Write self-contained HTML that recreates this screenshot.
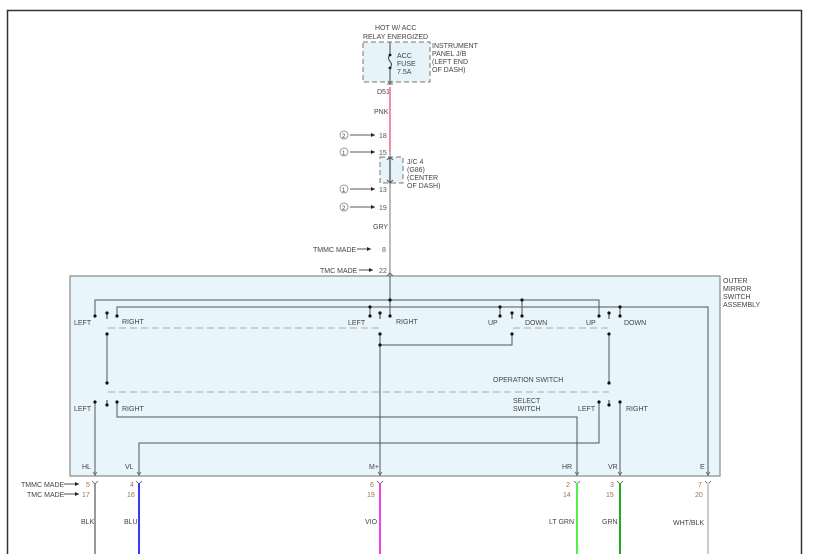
<!DOCTYPE html>
<html><head><meta charset="utf-8"><style>
html,body{margin:0;padding:0;background:#fff;width:814px;height:554px;overflow:hidden}
svg{display:block}
text{font-family:"Liberation Sans",sans-serif;font-size:7px;fill:#444}
.n{fill:#556}
.o{fill:#a07050}
</style></head><body>
<svg width="814" height="554" viewBox="0 0 814 554">
<defs>
<marker id="ah" markerWidth="6" markerHeight="6" refX="5" refY="3" orient="auto"><path d="M0,0.5 L5,3 L0,5.5Z" fill="#222"/></marker>
</defs>
<!-- frame -->
<path d="M7.5,554 V10.5 H801.5 V554" fill="none" stroke="#333" stroke-width="1.5"/>

<!-- top fuse box -->
<text x="375" y="30">HOT W/ ACC</text>
<text x="363" y="39">RELAY ENERGIZED</text>
<rect x="363" y="42" width="67" height="40" fill="#e6f3f9" stroke="#777" stroke-dasharray="5,3"/>
<text x="432" y="48">INSTRUMENT</text>
<text x="432" y="56">PANEL J/B</text>
<text x="432" y="64">(LEFT END</text>
<text x="432" y="72">OF DASH)</text>
<line x1="390" y1="42" x2="390" y2="55" stroke="#444"/>
<path d="M390,55 q-3,3 0,6.5 q3,3 0,6.5" fill="none" stroke="#444"/>
<circle cx="390" cy="55" r="1.4" fill="#111"/><circle cx="390" cy="68" r="1.4" fill="#111"/>
<line x1="390" y1="68" x2="390" y2="82" stroke="#444"/>
<text x="397" y="58">ACC</text><text x="397" y="66">FUSE</text><text x="397" y="74">7.5A</text>
<path d="M387,84 h6 M388,81 l2,3 l2,-3" stroke="#666" fill="none"/>
<text x="377" y="94">D51</text>
<line x1="390" y1="87" x2="390" y2="152" stroke="#f28aa8" stroke-width="2"/>
<text x="374" y="114">PNK</text>
<circle cx="344" cy="135" r="4" fill="none" stroke="#777" stroke-width=".7"/><text x="342" y="138" style="font-size:6px">2</text>
<line x1="350" y1="135" x2="375" y2="135" stroke="#222" stroke-width=".8" marker-end="url(#ah)"/><text class="n" x="379" y="138">18</text>
<circle cx="344" cy="152" r="4" fill="none" stroke="#777" stroke-width=".7"/><text x="342" y="155" style="font-size:6px">1</text>
<line x1="350" y1="152" x2="375" y2="152" stroke="#222" stroke-width=".8" marker-end="url(#ah)"/><text class="n" x="379" y="155">15</text>
<rect x="380" y="157" width="23" height="26" fill="#e6f3f9" stroke="#777" stroke-dasharray="5,3"/>
<text x="407" y="164">J/C 4</text><text x="407" y="172">(G86)</text><text x="407" y="180">(CENTER</text><text x="407" y="188">OF DASH)</text>
<line x1="390" y1="152" x2="390" y2="276" stroke="#bbb" stroke-width="2"/>
<path d="M387,160 l3,-3 l3,3 M387,180 l3,3 l3,-3" stroke="#555" fill="none"/>
<line x1="390" y1="157" x2="390" y2="183" stroke="#555"/>
<circle cx="344" cy="189" r="4" fill="none" stroke="#777" stroke-width=".7"/><text x="342" y="192" style="font-size:6px">1</text>
<line x1="350" y1="189" x2="375" y2="189" stroke="#222" stroke-width=".8" marker-end="url(#ah)"/><text class="n" x="379" y="192">13</text>
<circle cx="344" cy="207" r="4" fill="none" stroke="#777" stroke-width=".7"/><text x="342" y="210" style="font-size:6px">2</text>
<line x1="350" y1="207" x2="375" y2="207" stroke="#222" stroke-width=".8" marker-end="url(#ah)"/><text class="n" x="379" y="210">19</text>
<text x="373" y="229">GRY</text>
<text x="313" y="252">TMMC MADE</text><line x1="357" y1="249" x2="371" y2="249" stroke="#222" stroke-width=".8" marker-end="url(#ah)"/><text class="n" x="382" y="252">8</text>
<text x="320" y="273">TMC MADE</text><line x1="359" y1="270" x2="373" y2="270" stroke="#222" stroke-width=".8" marker-end="url(#ah)"/><text class="n" x="379" y="273">22</text>

<!-- main box -->
<rect x="70" y="276" width="650" height="200" fill="#e8f5fb" stroke="#888" stroke-width="1.2"/>
<path d="M387,276 l3,-3 l3,3" stroke="#666" fill="none"/>
<text x="723" y="283">OUTER</text><text x="723" y="291">MIRROR</text><text x="723" y="299">SWITCH</text><text x="723" y="307">ASSEMBLY</text>

<g stroke="#555" fill="none" stroke-width="1">
<path d="M390,276 V316"/>
<path d="M95,316 V300 H599 V316"/>
<path d="M522,300 V316"/>
<path d="M117,316 V307 H708 V476"/>
<path d="M370,307 V316 M500,307 V316 M620,307 V316"/>
<path d="M107,334 V383"/>
<path d="M380,334 V476"/>
<path d="M380,345 H512 V334"/>
<path d="M609,334 V383"/>
<path d="M95,402 V476"/>
<path d="M117,402 V417 H577 V476"/>
<path d="M139,476 V443 H599 V402"/>
<path d="M620,402 V476"/>
</g>
<g stroke="#aaa" stroke-dasharray="7,4" stroke-width="1">
<path d="M108,328 H380 M513,328 H609 M108,392 H609"/>
</g>
<g stroke="#333" stroke-width="1" fill="none">
<path d="M107,313 V319 M380,313 V319 M512,313 V319 M609,313 V319 M107,400 V405 M609,400 V405"/>
</g>
<g fill="#111">
<circle cx="390" cy="300" r="1.6"/><circle cx="522" cy="300" r="1.6"/>
<circle cx="370" cy="307" r="1.6"/><circle cx="500" cy="307" r="1.6"/><circle cx="620" cy="307" r="1.6"/>
<circle cx="95" cy="316" r="1.6"/><circle cx="117" cy="316" r="1.6"/><circle cx="370" cy="316" r="1.6"/><circle cx="390" cy="316" r="1.6"/>
<circle cx="500" cy="316" r="1.6"/><circle cx="522" cy="316" r="1.6"/><circle cx="599" cy="316" r="1.6"/><circle cx="620" cy="316" r="1.6"/>
<circle cx="107" cy="313" r="1.6"/><circle cx="380" cy="313" r="1.6"/><circle cx="512" cy="313" r="1.6"/><circle cx="609" cy="313" r="1.6"/>
<circle cx="107" cy="334" r="1.6"/><circle cx="380" cy="334" r="1.6"/><circle cx="512" cy="334" r="1.6"/><circle cx="609" cy="334" r="1.6"/>
<circle cx="380" cy="345" r="1.6"/>
<circle cx="107" cy="383" r="1.6"/><circle cx="609" cy="383" r="1.6"/>
<circle cx="107" cy="405" r="1.6"/><circle cx="609" cy="405" r="1.6"/>
<circle cx="95" cy="402" r="1.6"/><circle cx="117" cy="402" r="1.6"/><circle cx="599" cy="402" r="1.6"/><circle cx="620" cy="402" r="1.6"/>
</g>
<text x="74" y="325">LEFT</text><text x="122" y="324">RIGHT</text>
<text x="348" y="325">LEFT</text><text x="396" y="324">RIGHT</text>
<text x="488" y="325">UP</text><text x="525" y="325">DOWN</text>
<text x="586" y="325">UP</text><text x="624" y="325">DOWN</text>
<text x="493" y="382">OPERATION SWITCH</text>
<text x="513" y="403">SELECT</text><text x="513" y="411">SWITCH</text>
<text x="74" y="411">LEFT</text><text x="122" y="411">RIGHT</text>
<text x="578" y="411">LEFT</text><text x="626" y="411">RIGHT</text>
<text x="82" y="469">HL</text><text x="125" y="469">VL</text><text x="369" y="469">M+</text>
<text x="562" y="469">HR</text><text x="608" y="469">VR</text><text x="700" y="469">E</text>
<g stroke="#666" fill="none" stroke-width=".8">
<path d="M93,472 l2,3 l2,-3 M137,472 l2,3 l2,-3 M378,472 l2,3 l2,-3 M575,472 l2,3 l2,-3 M618,472 l2,3 l2,-3 M706,472 l2,3 l2,-3"/>
<path d="M92,481 l3,3 l3,-3 M136,481 l3,3 l3,-3 M377,481 l3,3 l3,-3 M574,481 l3,3 l3,-3 M617,481 l3,3 l3,-3 M705,481 l3,3 l3,-3"/>
</g>
<!-- bottom wires -->
<line x1="95" y1="483" x2="95" y2="554" stroke="#777" stroke-width="1.5"/>
<line x1="139" y1="483" x2="139" y2="554" stroke="#3a3af5" stroke-width="2"/>
<line x1="380" y1="483" x2="380" y2="554" stroke="#f040f0" stroke-width="2"/>
<line x1="577" y1="483" x2="577" y2="554" stroke="#55ee44" stroke-width="2"/>
<line x1="620" y1="483" x2="620" y2="554" stroke="#22aa22" stroke-width="2"/>
<line x1="708" y1="483" x2="708" y2="554" stroke="#ccc" stroke-width="2"/>
<text x="21" y="487">TMMC MADE</text><line x1="64" y1="484" x2="79" y2="484" stroke="#222" stroke-width=".8" marker-end="url(#ah)"/>
<text x="27" y="497">TMC MADE</text><line x1="64" y1="494" x2="79" y2="494" stroke="#222" stroke-width=".8" marker-end="url(#ah)"/>
<text class="o" x="86" y="487">5</text><text class="o" x="82" y="497">17</text>
<text class="o" x="130" y="487">4</text><text class="o" x="127" y="497">16</text>
<text class="o" x="370" y="487">6</text><text class="o" x="367" y="497">19</text>
<text class="o" x="566" y="487">2</text><text class="o" x="563" y="497">14</text>
<text class="o" x="610" y="487">3</text><text class="o" x="606" y="497">15</text>
<text class="o" x="698" y="487">7</text><text class="o" x="695" y="497">20</text>
<text x="81" y="524">BLK</text><text x="124" y="524">BLU</text><text x="365" y="524">VIO</text>
<text x="549" y="524">LT GRN</text><text x="602" y="524">GRN</text><text x="673" y="525">WHT/BLK</text>
</svg>
</body></html>
